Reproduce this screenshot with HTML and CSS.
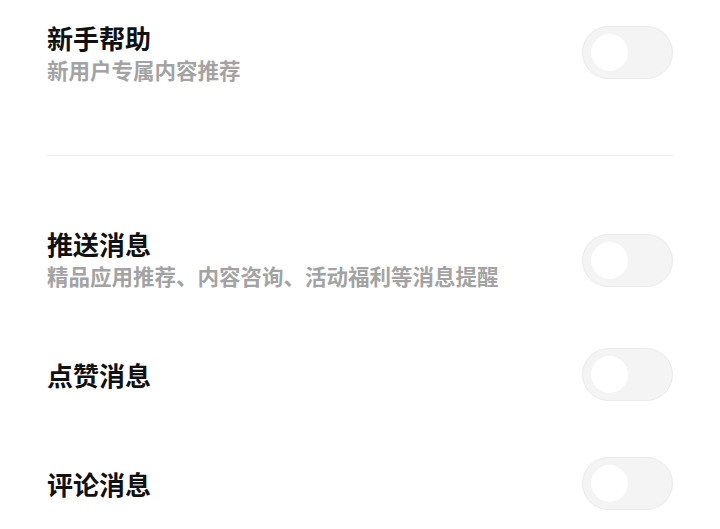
FILE: index.html
```html
<!DOCTYPE html>
<html lang="zh-CN">
<head>
<meta charset="utf-8">
<link rel="stylesheet" href="styles.css">
</head>
<body>
<div class="page">
  <div class="item item-first">
    <div class="text">
      <div class="title">新手帮助</div>
      <div class="sub">新用户专属内容推荐</div>
    </div>
    <div class="toggle"><span class="knob"></span></div>
  </div>
  <div class="divider"></div>
  <div class="item item-push">
    <div class="text">
      <div class="title">推送消息</div>
      <div class="sub">精品应用推荐、内容咨询、活动福利等消息提醒</div>
    </div>
    <div class="toggle"><span class="knob"></span></div>
  </div>
  <div class="item item-like">
    <div class="text">
      <div class="title">点赞消息</div>
    </div>
    <div class="toggle"><span class="knob"></span></div>
  </div>
  <div class="item item-comment">
    <div class="text">
      <div class="title">评论消息</div>
    </div>
    <div class="toggle"><span class="knob"></span></div>
  </div>
</div>
</body>
</html>
```
FILE: styles.css
```css
html, body {
  margin: 0;
  padding: 0;
  background: #ffffff;
}
body {
  font-family: "Noto Sans CJK SC", "Noto Sans", sans-serif;
}
.page {
  padding: 22px 47px 0;
}
.item {
  display: flex;
  align-items: center;
  justify-content: space-between;
}
.item-push {
  margin-top: 72px;
}
.item-like {
  margin-top: 56px;
}
.item-comment {
  margin-top: 56px;
}
.title {
  font-size: 26px;
  line-height: 32px;
  font-weight: 700;
  color: #111111;
}
.sub {
  font-size: 21.5px;
  line-height: 32px;
  font-weight: 700;
  color: #a3a3a3;
}
.divider {
  margin-top: 69px;
  height: 1px;
  background: #f0f0f0;
}
.toggle {
  box-sizing: border-box;
  width: 91px;
  height: 53px;
  border-radius: 27px;
  background: #f4f4f4;
  border: 1px solid #ebebeb;
  display: flex;
  align-items: center;
  padding-left: 8px;
}
.item-first .toggle {
  margin-top: -3px;
}
.knob {
  width: 37px;
  height: 37px;
  border-radius: 50%;
  background: #ffffff;
}
```
